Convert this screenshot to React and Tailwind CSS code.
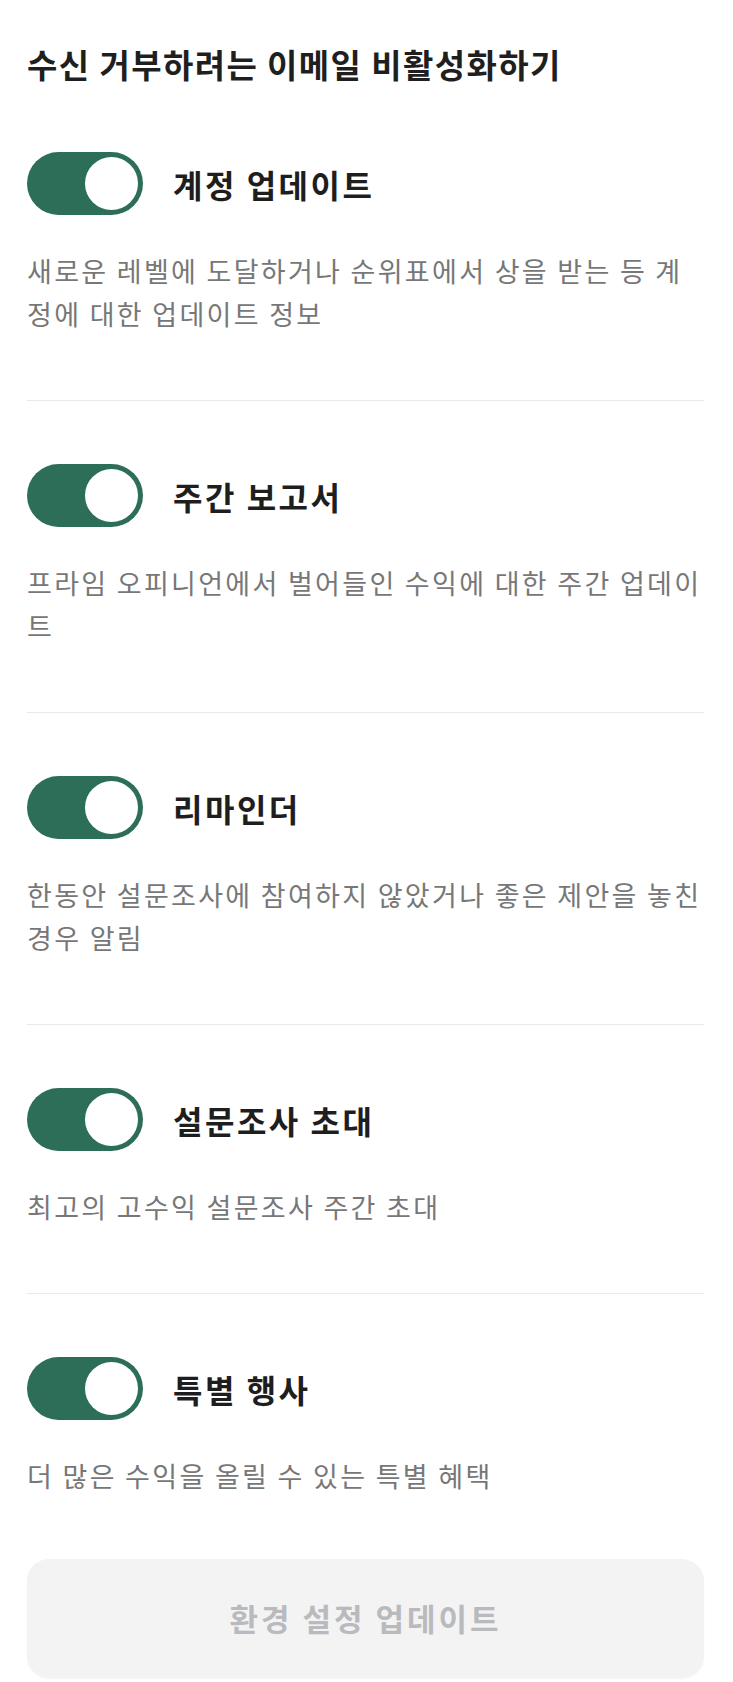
import {useState} from "react";

const SECTIONS = [
    {
        title: "계정 업데이트",
        text: "새로운 레벨에 도달하거나 순위표에서 상을 받는 등 계정에 대한 업데이트 정보",
    },
    {
        title: "주간 보고서",
        text: "프라임 오피니언에서 벌어들인 수익에 대한 주간 업데이트",
    },
    {
        title: "리마인더",
        text: "한동안 설문조사에 참여하지 않았거나 좋은 제안을 놓친 경우 알림",
    },
    {
        title: "설문조사 초대",
        text: "최고의 고수익 설문조사 주간 초대",
    },
    {
        title: "특별 행사",
        text: "더 많은 수익을 올릴 수 있는 특별 혜택",
    },
];

function Toggle({on, onChange}) {
    return (
        <button
            type="button"
            onClick={onChange}
            className={`flex h-[63px] w-[116px] shrink-0 items-center rounded-full p-[5px] ${
                on ? "justify-end bg-[#2c6e58]" : "justify-start bg-[#d4d4d4]"
            }`}
        >
            <span className="block h-[53px] w-[53px] rounded-full bg-white"/>
        </button>
    );
}

export default function App() {
    const [enabled, setEnabled] = useState(SECTIONS.map(() => true));

    const flip = (i) => {
        setEnabled((prev) => prev.map((v, idx) => (idx === i ? !v : v)));
    };

    return (
        <div
            className="min-h-screen bg-white pl-[27px] pr-[29px] pt-[42px]"
            style={{fontFamily: '"Noto Sans CJK KR", "Noto Sans", sans-serif'}}
        >
            <h1 className="text-[33px] font-bold leading-[44px] tracking-[1.4px] text-[#1f1f1f]">
                수신 거부하려는 이메일 비활성화하기
            </h1>

            <div className="mt-[66px]">
                {SECTIONS.map((s, i) => (
                    <div key={s.title}>
                        {i > 0 && <div className="mb-[63px] mt-[65px] h-px bg-[#e9e9e9]"/>}
                        <div className="flex items-center gap-[30px]">
                            <Toggle on={enabled[i]} onChange={() => flip(i)}/>
                            <span className="text-[32px] font-bold leading-[40px] tracking-[2.5px] text-[#1e1e1e]">
                                {s.title}
                            </span>
                        </div>
                        <p className="mt-[34px] text-[27px] leading-[43px] tracking-[2.3px] text-[#777777]">
                            {s.text}
                        </p>
                    </div>
                ))}
            </div>

            <button
                type="button"
                disabled
                className="mt-[62px] flex h-[119px] w-full items-center justify-center rounded-[22px] bg-[#f3f3f4] text-[31px] font-bold tracking-[3px] text-[#b9babe] shadow-[0_1px_2px_rgba(0,0,0,0.04)]"
            >
                환경 설정 업데이트
            </button>
        </div>
    );
}
